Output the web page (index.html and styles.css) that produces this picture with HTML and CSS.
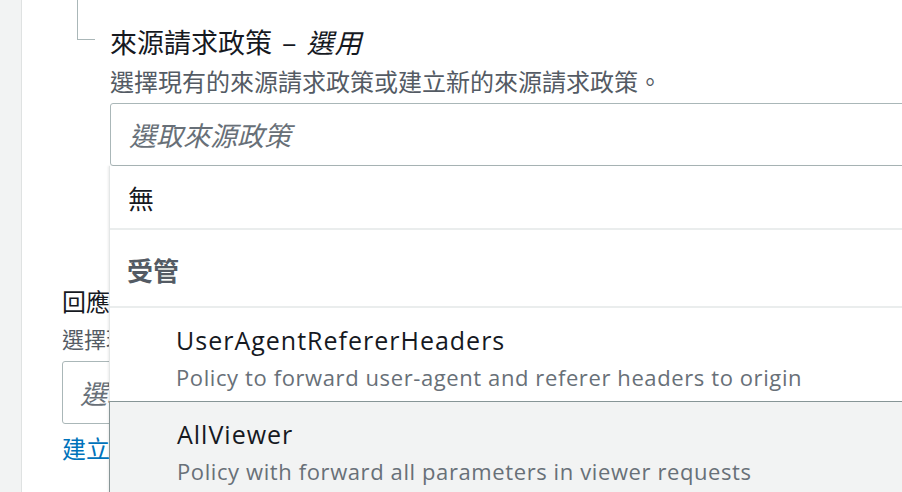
FILE: index.html
```html
<!DOCTYPE html>
<html lang="zh-Hant">
<head>
<meta charset="utf-8">
<link rel="stylesheet" href="styles.css">
</head>
<body>
<div class="page">
  <aside class="rail"></aside>
  <main class="main">
    <section class="tree">
      <div class="connector"></div>
      <div class="field">
        <div class="label">來源請求政策 – <i>選用</i></div>
        <div class="desc">選擇現有的來源請求政策或建立新的來源請求政策。</div>
        <div class="select">
          <span class="placeholder">選取來源政策</span>
        </div>
        <ul class="menu">
          <li class="opt-plain">無</li>
          <li class="group">受管</li>
          <li class="opt">
            <div class="opt-title">UserAgentRefererHeaders</div>
            <div class="opt-desc">Policy to forward user-agent and referer headers to origin</div>
          </li>
          <li class="opt opt-hl">
            <div class="opt-title">AllViewer</div>
            <div class="opt-desc">Policy with forward all parameters in viewer requests</div>
          </li>
        </ul>
      </div>
    </section>
    <section class="field2">
      <div class="label2">回應標頭政策 – <i>選用</i></div>
      <div class="desc2">選擇現有的回應標頭政策或建立新的回應標頭政策。</div>
      <div class="select2"><span class="placeholder">選取回應標頭</span></div>
      <a class="link" href="#">建立回應標頭政策</a>
    </section>
  </main>
</div>
<div class="corner"></div>
</body>
</html>
```

FILE: styles.css
```css
* { box-sizing: border-box; }
html, body { margin: 0; padding: 0; }
body {
  width: 902px;
  height: 492px;
  overflow: hidden;
  background: #ffffff;
  font-family: "Open Sans", "Noto Sans CJK TC", sans-serif;
  color: #16191f;
}
.page {
  display: flex;
  height: 492px;
}
.rail {
  width: 22px;
  flex: none;
  background: #f2f3f3;
  border-right: 1px solid #dfe2e2;
}
.main {
  flex: 1;
  padding-left: 40px;
  position: relative;
}
.tree {
  display: flex;
  margin-left: 15px;
}
.connector {
  width: 18px;
  height: 40px;
  flex: none;
  border-left: 1px solid #aab7b8;
  border-bottom: 1px solid #aab7b8;
}
.field {
  flex: 1;
  margin-left: 15px;
  padding-top: 26px;
  position: relative;
}
.label {
  font-family: "Noto Sans CJK TC", sans-serif;
  font-size: 27px;
  line-height: 32px;
  word-spacing: 4px;
  color: #16191f;
  white-space: nowrap;
}
.label i, .label2 i { font-style: italic; letter-spacing: 1px; }
.desc {
  font-family: "Noto Sans CJK TC", sans-serif;
  font-size: 24px;
  line-height: 30px;
  color: #545b64;
  margin-top: 8px;
  white-space: nowrap;
}
.select {
  margin-top: 7px;
  height: 63px;
  margin-right: -4px;
  border: 1px solid #aab7b8;
  border-radius: 3px;
  display: flex;
  align-items: center;
  padding-left: 18px;
}
.placeholder {
  font-family: "Noto Sans CJK TC", sans-serif;
  font-size: 27px;
  font-style: italic;
  color: #687078;
  white-space: nowrap;
}
.menu {
  position: absolute;
  top: 166px;
  left: -1px;
  right: -10px;
  margin: 0;
  padding: 0;
  list-style: none;
  background: #ffffff;
  border-left: 1px solid #e4e7e7;
  box-shadow: -1px 0 2px rgba(0,0,0,0.08);
  z-index: 2;
}
.opt-plain {
  height: 64px;
  display: flex;
  align-items: center;
  padding-left: 18px;
  font-family: "Noto Sans CJK TC", sans-serif;
  font-size: 26px;
  color: #16191f;
  border-bottom: 2px solid #eaeded;
}
.group {
  height: 78px;
  display: flex;
  align-items: center;
  padding-left: 17px;
  padding-top: 2px;
  font-family: "Noto Sans CJK TC", sans-serif;
  font-size: 26px;
  font-weight: 700;
  color: #545b64;
  border-bottom: 2px solid #eaeded;
}
.opt {
  height: 93px;
  padding-left: 66px;
  padding-top: 16px;
}
.opt-title {
  font-size: 25px;
  line-height: 32px;
  letter-spacing: 1px;
  color: #16191f;
  white-space: nowrap;
}
.opt-desc {
  font-size: 22px;
  line-height: 30px;
  letter-spacing: 0.6px;
  margin-top: 6px;
  color: #687078;
  white-space: nowrap;
}
.opt-hl {
  background: #f2f3f3;
  border-top: 1px solid #879596;
  border-left: 1px solid #879596;
  margin-left: -1px;
  padding-left: 67px;
}
.field2 {
  margin-top: 119px;
  width: 48px;
  overflow: hidden;
}
.label2 {
  font-family: "Noto Sans CJK TC", sans-serif;
  font-size: 24px;
  line-height: 32px;
  color: #16191f;
  white-space: nowrap;
}
.desc2 {
  font-family: "Noto Sans CJK TC", sans-serif;
  font-size: 22px;
  line-height: 30px;
  color: #545b64;
  margin-top: 6px;
  white-space: nowrap;
}
.select2 {
  margin-top: 8px;
  width: 300px;
  height: 63px;
  border: 1px solid #aab7b8;
  border-radius: 3px;
  display: flex;
  align-items: center;
  padding-left: 17px;
}
.link {
  display: block;
  margin-top: 9px;
  font-family: "Noto Sans CJK TC", sans-serif;
  font-size: 24px;
  line-height: 30px;
  color: #0073bb;
  text-decoration: none;
  white-space: nowrap;
}
.corner {
  position: absolute;
  left: 866px;
  top: 489px;
  width: 40px;
  height: 10px;
  border: 1px solid #e6d9dc;
  background: #f7f7f7;
}
```
